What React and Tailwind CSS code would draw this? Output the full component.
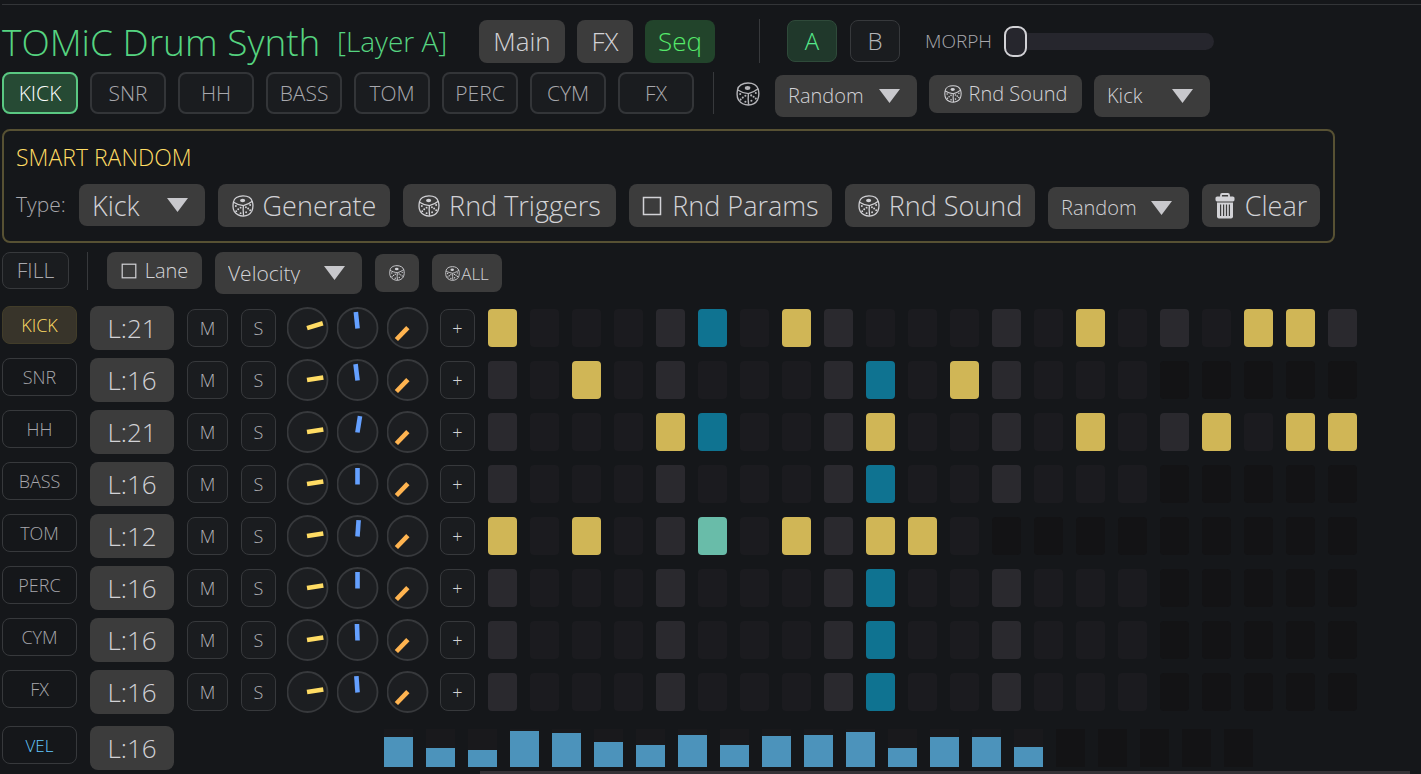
import { useState } from "react";

const VOICES = ["KICK", "SNR", "HH", "BASS", "TOM", "PERC", "CYM", "FX"];
const STEPS = 21;

const TRACKS = [
  { name: "KICK", length: 21, on: [0, 7, 14, 18, 19], playhead: 5, knobs: [73, -6, -136] },
  { name: "SNR", length: 16, on: [2, 11], playhead: 9, knobs: [81, -7, -136] },
  { name: "HH", length: 21, on: [4, 9, 14, 17, 19, 20], playhead: 5, knobs: [81, 9, -136] },
  { name: "BASS", length: 16, on: [], playhead: 9, knobs: [81, 0, -136] },
  { name: "TOM", length: 12, on: [0, 2, 5, 7, 9, 10], playhead: 5, knobs: [81, 4, -136] },
  { name: "PERC", length: 16, on: [], playhead: 9, knobs: [81, 0, -136] },
  { name: "CYM", length: 16, on: [], playhead: 9, knobs: [81, -2, -136] },
  { name: "FX", length: 16, on: [], playhead: 9, knobs: [81, -4, -136] },
];

const VELOCITIES = [30, 19, 17, 36, 34, 25, 22, 32, 22, 31, 32, 35, 19, 30, 30, 20];

const KNOBS = [
  { label: "volume", color: "#ffdc64" },
  { label: "pan", color: "#64a0ff" },
  { label: "filter", color: "#ffb450" },
];

function Dice({ className }) {
  return (
    <svg viewBox="0 0 24 24" className={className} fill="none" stroke="currentColor" strokeWidth="1.4" strokeLinejoin="round" aria-hidden="true">
      <path d="M12 1C6.500 1 2 3.600 1.600 7.600C.8 11.500 1 15.600 2.600 18.200C4.600 21 8.500 23 12.400 23C16.500 22.800 20 20.800 21.600 17.800C23 14.600 23.200 10.800 22.200 7.200C21.200 3.400 17 1 12 1Z" />
      <path d="M1.700 8C4 9.600 9 11.200 12.400 11.600C16 10.600 20.200 8.400 22.200 6.800M12.400 11.600C12 15 12.200 19 12.600 22.600" />
      <ellipse cx="11.600" cy="6" rx="2.800" ry="1.900" fill="currentColor" stroke="none" />
      <g fill="currentColor" stroke="none">
        <circle cx="4.200" cy="12" r="1.050" />
        <circle cx="9.400" cy="13.800" r="1.050" />
        <circle cx="6.800" cy="15.600" r="1.050" />
        <circle cx="4.600" cy="17.600" r="1.050" />
        <circle cx="9.400" cy="19.800" r="1.050" />
        <circle cx="15.200" cy="13.400" r="1.050" />
        <circle cx="19.800" cy="11" r="1.050" />
        <circle cx="17.600" cy="14.800" r="1.050" />
        <circle cx="15.400" cy="18.800" r="1.050" />
        <circle cx="19.800" cy="16.600" r="1.050" />
      </g>
    </svg>
  );
}

function Square({ className }) {
  return (
    <svg viewBox="0 0 20 20" className={className} fill="none" stroke="currentColor" strokeWidth="1.500" aria-hidden="true">
      <rect x="1.500" y="1.500" width="17" height="17" />
    </svg>
  );
}

function Trash({ className }) {
  return (
    <svg viewBox="0 0 20 26" className={className} aria-hidden="true">
      <path d="M6 4V2.200Q6 1 7.200 1H12.800Q14 1 14 2.200V4" fill="none" stroke="currentColor" strokeWidth="1.800" />
      <rect x="0.500" y="3.400" width="19" height="5" rx="1.600" fill="currentColor" />
      <path d="M2 9.400H18V23.600Q18 25.600 16 25.600H4Q2 25.600 2 23.600Z" fill="currentColor" />
      <path d="M5.600 11.500V23M8.600 11.500V23M11.500 11.500V23M14.400 11.500V23" stroke="#3c3c3c" strokeWidth="1.200" />
    </svg>
  );
}

function Solid({ className, children, ...rest }) {
  return (
    <button type="button" className={`flex shrink-0 items-center justify-center rounded-lg bg-[#3c3c3c] text-[#d2d2d6] ${className}`} {...rest}>
      {children}
    </button>
  );
}

function Outline({ className, children, ...rest }) {
  return (
    <button type="button" className={`flex shrink-0 items-center justify-center rounded-lg border ${className}`} {...rest}>
      {children}
    </button>
  );
}

function Picker({ label, options, className }) {
  return (
    <div className={`relative h-[42px] shrink-0 rounded-lg bg-[#3c3c3c] text-[#d2d2d6] ${className}`}>
      <select aria-label={label} className="size-full appearance-none rounded-lg bg-transparent pl-[13px]">
        {options.map((o) => (
          <option key={o}>{o}</option>
        ))}
      </select>
      <svg viewBox="0 0 21 14" className="pointer-events-none absolute top-[14px] right-[17px] h-[14px] w-[21px] text-[#c8c8cc]" aria-hidden="true">
        <path d="M0 0H21L10.500 14Z" fill="currentColor" />
      </svg>
    </div>
  );
}

function Knob({ label, angle, color }) {
  const [value, setValue] = useState(angle);
  return (
    <label className="relative block size-[42px] shrink-0">
      <svg viewBox="0 0 42 42" className="size-full" aria-hidden="true">
        <circle cx="20.500" cy="21" r="20" fill="#1c1e21" stroke="#37393c" strokeWidth="1.800" />
        <path d="M20.500 21.500V5" stroke={color} strokeWidth="4.600" transform={`rotate(${value} 20.500 21)`} />
      </svg>
      <input
        type="range"
        aria-label={label}
        min="-140"
        max="140"
        value={value}
        onChange={(e) => setValue(Number(e.target.value))}
        className="absolute inset-0 size-full cursor-pointer opacity-0"
      />
    </label>
  );
}

function stepColor(track, active, i) {
  if (i >= track.length) return "bg-[#131315]";
  if (i === track.playhead) return active ? "bg-[#69bca9]" : "bg-[#0f7391]";
  if (active) return "bg-[#d0b656]";
  return i % 4 === 0 ? "bg-[#2a292e]" : "bg-[#1b1b1f]";
}

function Track({ track, selected }) {
  const [on, setOn] = useState(track.on);
  const toggle = (i) => setOn(on.includes(i) ? on.filter((s) => s !== i) : [...on, i]);
  return (
    <div className="flex h-11 items-center gap-[13px]">
      <Outline className={`h-[38px] w-[75px] self-start text-[18px] ${selected ? "border-[#423d29] bg-[#38342a] text-[#ffdc64]" : "border-[#37393c] text-[#a8a8ad]"}`}>
        {track.name}
      </Outline>
      <Solid className="h-11 w-[84px] text-[26px]">L:{track.length}</Solid>
      <Outline className="h-[38px] w-[41px] border-[#37393c] bg-[#1a1c1f] text-[18px] text-[#b4b4b8]">M</Outline>
      <Outline className="h-[38px] w-[35px] border-[#37393c] bg-[#1a1c1f] text-[18px] text-[#b4b4b8]">S</Outline>
      <div className="-mx-0.5 flex gap-2">
        {KNOBS.map((k, i) => (
          <Knob key={k.label} label={`${track.name} ${k.label}`} angle={track.knobs[i]} color={k.color} />
        ))}
      </div>
      <Outline className="h-[38px] w-[35px] border-[#37393c] bg-[#1a1c1f] text-[18px] text-[#d2d2d6]">+</Outline>
      <div className="flex gap-[13px]">
        {Array.from({ length: STEPS }, (_, i) => (
          <button
            key={i}
            type="button"
            disabled={i >= track.length}
            aria-label={`${track.name} step ${i + 1}`}
            aria-pressed={on.includes(i)}
            onClick={() => toggle(i)}
            className={`h-[38px] w-[29px] shrink-0 rounded ${stepColor(track, on.includes(i), i)}`}
          />
        ))}
      </div>
    </div>
  );
}

export default function App() {
  const [voice, setVoice] = useState("KICK");
  const [morph, setMorph] = useState(0);

  return (
    <main className="min-h-screen overflow-x-hidden bg-[#15171a] pt-1 pl-0.5 font-['Open_Sans',sans-serif] leading-none font-light whitespace-nowrap">
      <header className="border-t border-[#333538] pt-[14px]">
        <div className="flex h-11 items-center">
          <h1 className="w-[335px] text-[37px] text-[#55d480]">TOMiC Drum Synth</h1>
          <span className="w-[142px] text-[28px] text-[#55d480]">[Layer A]</span>
          <nav className="flex gap-3 text-[26px]">
            <Solid className="h-[43px] w-[86px]">Main</Solid>
            <Solid className="h-[43px] w-[56px]">FX</Solid>
            <button type="button" className="h-[43px] w-[70px] rounded-lg bg-[#22442b] text-[#55e86a]">Seq</button>
          </nav>
          <div className="ml-11 h-11 w-px bg-[#37393c]" />
          <div className="ml-[27px] flex gap-[13px] text-[24px]">
            <Outline className="h-[42px] w-[50px] border-[#2f4a3a] bg-[#20382b] text-[#55e88a]">A</Outline>
            <Outline className="h-[42px] w-[50px] border-[#37393c] bg-[#1a1c1f] text-[#b4b4b8]">B</Outline>
          </div>
          <label htmlFor="morph" className="ml-[25px] w-[79px] text-[19px] text-[#a8a8ad]">MORPH</label>
          <input
            id="morph"
            type="range"
            min="0"
            max="100"
            value={morph}
            onChange={(e) => setMorph(Number(e.target.value))}
            className="h-[31px] w-[210px] appearance-none bg-transparent [&::-webkit-slider-runnable-track]:h-[17px] [&::-webkit-slider-runnable-track]:rounded-full [&::-webkit-slider-runnable-track]:bg-[#26262d] [&::-webkit-slider-thumb]:-mt-[7px] [&::-webkit-slider-thumb]:h-[31px] [&::-webkit-slider-thumb]:w-[23px] [&::-webkit-slider-thumb]:appearance-none [&::-webkit-slider-thumb]:rounded-[9px] [&::-webkit-slider-thumb]:border-2 [&::-webkit-slider-thumb]:border-[#d2d2d6] [&::-webkit-slider-thumb]:bg-[#26262d]"
          />
        </div>
      </header>

      <div className="mt-[9px] flex h-[45px] items-start">
        <nav className="flex gap-3 text-[21px]">
          {VOICES.map((v) => (
            <button
              key={v}
              type="button"
              onClick={() => setVoice(v)}
              className={`h-[42px] w-[76px] rounded-lg border-2 ${v === voice ? "border-[#5ac882] bg-[#264a34] text-white" : "border-[#333538] bg-[#1a1c1f] text-[#a8a8ad]"}`}
            >
              {v}
            </button>
          ))}
        </nav>
        <div className="ml-[19px] h-[42px] w-px bg-[#37393c]" />
        <div className="ml-[22px] flex gap-3 self-end text-[20px]">
          <button type="button" aria-label="Randomize" className="mr-[3px] flex h-[38px] items-center text-[#b4b4b8]">
            <Dice className="size-6" />
          </button>
          <Picker label="Random mode" options={["Random", "Subtle", "Wild"]} className="w-[142px]" />
          <Solid className="h-[38px] w-[153px] gap-[7px]">
            <Dice className="size-[18px]" />
            Rnd Sound
          </Solid>
          <Picker label="Sound type" options={VOICES.map((v) => v[0] + v.slice(1).toLowerCase())} className="w-[116px]" />
        </div>
      </div>

      <section className="mt-3 w-fit rounded-lg border-2 border-[#575133] py-3 pr-[13px] pl-3">
        <h2 className="text-[23px] leading-7 text-[#ffdc64]">SMART RANDOM</h2>
        <div className="mt-[13px] flex h-[45px] items-start gap-[13px] text-[27px]">
          <span className="flex h-[41px] w-[50px] items-center text-[21px] text-[#a8a8ad]">Type:</span>
          <Picker label="Type" options={["Kick", "Snare", "Hat"]} className="w-[126px]" />
          <Solid className="h-[43px] w-[172px] gap-[9px]">
            <Dice className="size-[22px]" />
            Generate
          </Solid>
          <Solid className="h-[43px] w-[213px] gap-[9px]">
            <Dice className="size-[22px]" />
            Rnd Triggers
          </Solid>
          <Solid className="h-[43px] w-[203px] gap-2.5">
            <Square className="size-5" />
            Rnd Params
          </Solid>
          <Solid className="h-[43px] w-[190px] gap-[9px]">
            <Dice className="size-[22px]" />
            Rnd Sound
          </Solid>
          <Picker label="Sound random mode" options={["Random", "Subtle", "Wild"]} className="w-[141px] self-end text-[20px]" />
          <Solid className="h-[43px] w-[118px] gap-2.5">
            <Trash className="h-[26px] w-5" />
            Clear
          </Solid>
        </div>
      </section>

      <div className="mt-[9px] flex h-[42px] items-start text-[20px]">
        <Outline className="h-[37px] w-[67px] border-[#37393c] bg-[#1a1c1f] text-[21px] text-[#a8a8ad]">FILL</Outline>
        <div className="ml-[18px] h-[38px] w-px bg-[#37393c]" />
        <div className="ml-[19px] flex gap-[13px]">
          <Solid className="h-[37px] w-[95px] gap-2">
            <Square className="size-4" />
            Lane
          </Solid>
          <Picker label="Lane parameter" options={["Velocity", "Pitch", "Decay"]} className="w-[147px] text-[21px]" />
          <Solid className="h-[38px] w-[44px] self-center" aria-label="Randomize lane">
            <Dice className="size-4" />
          </Solid>
          <Solid className="h-[38px] w-[70px] gap-px self-center text-[17px]">
            <Dice className="size-[15px]" />
            ALL
          </Solid>
        </div>
      </div>

      <section className="mt-3 flex flex-col gap-2">
        {TRACKS.map((t) => (
          <Track key={t.name} track={t} selected={t.name === voice} />
        ))}
      </section>

      <section className="mt-3 flex h-11 items-start gap-[13px]">
        <Outline className="h-[38px] w-[75px] border-[#37393c] text-[17px] text-[#64c8ff]">VEL</Outline>
        <Solid className="h-11 w-[84px] text-[26px]">L:16</Solid>
        <div className="ml-[197px] flex gap-[13px] pt-[3px]">
          {Array.from({ length: STEPS }, (_, i) => (
            <label key={i} className={`relative flex h-[38px] w-[29px] items-end ${i < 16 ? "bg-[#19191c]" : "bg-[#131315]"}`}>
              {i < 16 && (
                <>
                  <span className="w-full bg-[#4c93bb]" style={{ height: VELOCITIES[i] }} />
                  <input type="range" aria-label={`Velocity ${i + 1}`} min="0" max="38" defaultValue={VELOCITIES[i]} className="absolute inset-0 size-full opacity-0" />
                </>
              )}
            </label>
          ))}
        </div>
      </section>

      <div className="mt-px mr-[11px] ml-[478px] h-[3px] bg-[#353236]" />
    </main>
  );
}
